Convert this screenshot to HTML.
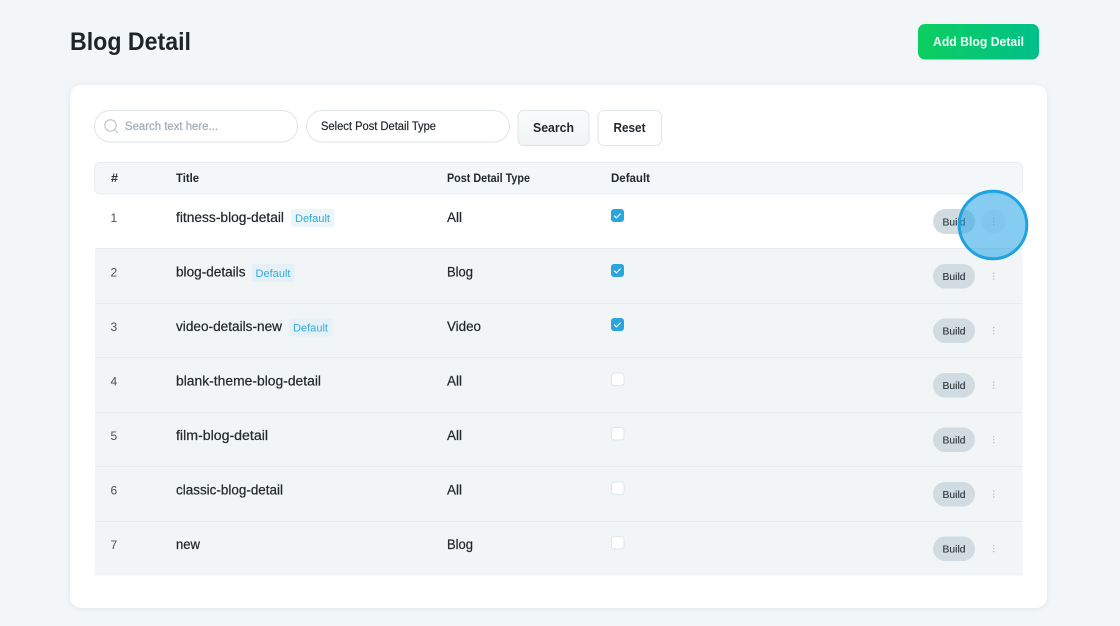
<!DOCTYPE html>
<html><head><meta charset="utf-8"><title>Blog Detail</title>
<style>
html,body{margin:0;padding:0;width:1120px;height:626px;overflow:hidden;background:#f2f6f9}
svg{display:block;filter:blur(.25px)}
text{font-family:"Liberation Sans",sans-serif;fill:#1f2429}
.t{font-size:13.5px;fill:#23282d;stroke:#23282d;stroke-width:.22px}
.h{font-size:11.5px;font-weight:700;fill:#23282d}
.b{font-size:11px;fill:#35a9dc}
.n{font-size:12px;fill:#4a5056}
.u{font-size:10.5px;fill:#2c3238;stroke:#2c3238;stroke-width:.12px}
.p{stroke:#a4adb4;stroke-width:.25px}
.q{stroke:#23282d;stroke-width:.2px}
</style></head><body>
<svg width="1120" height="626" viewBox="0 0 1120 626" xmlns="http://www.w3.org/2000/svg">
<defs>
<linearGradient id="g" x1="0" x2="1" y1="0" y2="0"><stop offset="0" stop-color="#0ccf5f"/><stop offset="1" stop-color="#00bf8a"/></linearGradient>
<linearGradient id="s" x1="0" x2="0" y1="0" y2="1"><stop offset="0" stop-color="#fafbfc"/><stop offset="1" stop-color="#f0f3f5"/></linearGradient>
<filter id="sh" x="-5%" y="-5%" width="110%" height="110%"><feDropShadow dx="0" dy="1" stdDeviation="3" flood-color="#a8b6c0" flood-opacity=".25"/></filter>
</defs>
<rect width="1120" height="626" fill="#f2f6f9"/>
<text x="70" y="50" font-size="25" font-weight="700" textLength="121" lengthAdjust="spacingAndGlyphs">Blog Detail</text>
<rect x="918" y="24" width="121" height="35.500" rx="7" fill="url(#g)"/>
<text x="933" y="46" font-size="13" font-weight="700" style="fill:#eafff3" textLength="91" lengthAdjust="spacingAndGlyphs">Add Blog Detail</text>

<rect x="70" y="85" width="977" height="523" rx="11" fill="#fff" filter="url(#sh)"/>

<rect x="94.500" y="110.500" width="203" height="31.500" rx="15.700" fill="#fff" stroke="#dfe5e8"/>
<circle cx="110.500" cy="125.500" r="5.700" fill="none" stroke="#b4bdc3" stroke-width="1"/>
<path d="M114.700 129.700l3.200 3.200" stroke="#b4bdc3" stroke-width="1" fill="none"/>
<text class="p" x="125" y="130" font-size="11.500" style="fill:#a4adb4" textLength="93" lengthAdjust="spacingAndGlyphs">Search text here...</text>
<rect x="306.500" y="110.500" width="203" height="31.500" rx="15.700" fill="#fff" stroke="#dfe5e8"/>
<text class="q" x="321" y="130" font-size="11.500" style="fill:#23282d" textLength="115" lengthAdjust="spacingAndGlyphs">Select Post Detail Type</text>
<rect x="518" y="110.500" width="71" height="35" rx="6" fill="url(#s)" stroke="#dfe5e8"/>
<text x="533" y="132" font-size="13" font-weight="700" style="fill:#23282d" textLength="41" lengthAdjust="spacingAndGlyphs">Search</text>
<rect x="598" y="110.500" width="63.500" height="35" rx="6" fill="#fff" stroke="#dfe5e8"/>
<text x="613.500" y="132" font-size="13" font-weight="700" style="fill:#23282d" textLength="32" lengthAdjust="spacingAndGlyphs">Reset</text>

<rect x="94.500" y="162.500" width="928" height="31.500" rx="6" fill="#f3f7fa" stroke="#e7ecef"/>
<text class="h" x="111" y="182" textLength="7" lengthAdjust="spacingAndGlyphs">#</text>
<text class="h" x="176" y="182" textLength="23" lengthAdjust="spacingAndGlyphs">Title</text>
<text class="h" x="447" y="182" textLength="83" lengthAdjust="spacingAndGlyphs">Post Detail Type</text>
<text class="h" x="611" y="182" textLength="39" lengthAdjust="spacingAndGlyphs">Default</text>

<!-- row tints -->
<rect x="95" y="249" width="927.500" height="326.500" fill="#f1f5f6"/>
<path d="M95 248.500H1022.500M95 303.500H1022.500M95 357.500H1022.500M95 412.500H1022.500M95 466.500H1022.500M95 521.500H1022.500" stroke="#e6ebee" stroke-width="1"/>

<!-- row 1 -->
<text class="n" x="110.500" y="222">1</text>
<text class="t" x="176" y="222" textLength="108" lengthAdjust="spacingAndGlyphs">fitness-blog-detail</text>
<rect x="291" y="209" width="43" height="18" rx="2" fill="#eaf6fb"/>
<text class="b" x="295" y="222" textLength="35" lengthAdjust="spacingAndGlyphs">Default</text>
<text class="t" x="447" y="222" textLength="15" lengthAdjust="spacingAndGlyphs">All</text>
<rect x="611" y="209" width="13" height="13" rx="3" fill="#2ba6dc"/>
<path d="M614.200 215.700l2.200 2.200 4.200-4.300" fill="none" stroke="#fff" stroke-width="1.100"/>
<rect x="933" y="209" width="42" height="25" rx="12.500" fill="#d0dce2"/>
<text class="u" x="942.500" y="225.500" textLength="23" lengthAdjust="spacingAndGlyphs">Build</text>
<circle cx="993.500" cy="221.500" r="12" fill="#eef3f6"/>
<path d="M993.700 218v1.200M993.700 221v1.200M993.700 224v1.200" stroke="#a6b4bc" stroke-width="1.100"/>

<!-- row 2 -->
<text class="n" x="110.500" y="276.500">2</text>
<text class="t" x="176" y="276.500" textLength="69.500" lengthAdjust="spacingAndGlyphs">blog-details</text>
<rect x="251.500" y="264" width="43.500" height="18" rx="2" fill="#e4f2f8"/>
<text class="b" x="255.500" y="277" textLength="35" lengthAdjust="spacingAndGlyphs">Default</text>
<text class="t" x="447" y="276.500" textLength="26" lengthAdjust="spacingAndGlyphs">Blog</text>
<rect x="611" y="264" width="13" height="13" rx="3" fill="#2ba6dc"/>
<path d="M614.200 270.700l2.200 2.200 4.200-4.300" fill="none" stroke="#fff" stroke-width="1.100"/>
<rect x="933" y="264" width="42" height="24.500" rx="12.200" fill="#d0dce2"/>
<text class="u" x="942.500" y="280" textLength="23" lengthAdjust="spacingAndGlyphs">Build</text>
<path d="M993.700 272.500v1.200M993.700 275.500v1.200M993.700 278.500v1.200" stroke="#a6b4bc" stroke-width="1.100"/>

<!-- row 3 -->
<text class="n" x="110.500" y="331">3</text>
<text class="t" x="176" y="331" textLength="106" lengthAdjust="spacingAndGlyphs">video-details-new</text>
<rect x="289" y="318.500" width="43" height="18" rx="2" fill="#e4f2f8"/>
<text class="b" x="293" y="331.500" textLength="35" lengthAdjust="spacingAndGlyphs">Default</text>
<text class="t" x="447" y="331" textLength="34" lengthAdjust="spacingAndGlyphs">Video</text>
<rect x="611" y="318" width="13" height="13" rx="3" fill="#2ba6dc"/>
<path d="M614.200 324.700l2.200 2.200 4.200-4.300" fill="none" stroke="#fff" stroke-width="1.100"/>
<rect x="933" y="318.500" width="42" height="24.500" rx="12.200" fill="#d0dce2"/>
<text class="u" x="942.500" y="334.500" textLength="23" lengthAdjust="spacingAndGlyphs">Build</text>
<path d="M993.700 327v1.200M993.700 330v1.200M993.700 333v1.200" stroke="#a6b4bc" stroke-width="1.100"/>

<!-- row 4 -->
<text class="n" x="110.500" y="385.500">4</text>
<text class="t" x="176" y="385.500" textLength="145" lengthAdjust="spacingAndGlyphs">blank-theme-blog-detail</text>
<text class="t" x="447" y="385.500" textLength="15" lengthAdjust="spacingAndGlyphs">All</text>
<rect x="611.500" y="373" width="12.500" height="12.500" rx="3" fill="#fff" stroke="#dfe5e8"/>
<rect x="933" y="373" width="42" height="24.500" rx="12.200" fill="#d0dce2"/>
<text class="u" x="942.500" y="389" textLength="23" lengthAdjust="spacingAndGlyphs">Build</text>
<path d="M993.700 381.500v1.200M993.700 384.500v1.200M993.700 387.500v1.200" stroke="#a6b4bc" stroke-width="1.100"/>

<!-- row 5 -->
<text class="n" x="110.500" y="440">5</text>
<text class="t" x="176" y="440" textLength="92" lengthAdjust="spacingAndGlyphs">film-blog-detail</text>
<text class="t" x="447" y="440" textLength="15" lengthAdjust="spacingAndGlyphs">All</text>
<rect x="611.500" y="427.500" width="12.500" height="12.500" rx="3" fill="#fff" stroke="#dfe5e8"/>
<rect x="933" y="427.500" width="42" height="24.500" rx="12.200" fill="#d0dce2"/>
<text class="u" x="942.500" y="443.500" textLength="23" lengthAdjust="spacingAndGlyphs">Build</text>
<path d="M993.700 436v1.200M993.700 439v1.200M993.700 442v1.200" stroke="#a6b4bc" stroke-width="1.100"/>

<!-- row 6 -->
<text class="n" x="110.500" y="494.500">6</text>
<text class="t" x="176" y="494.500" textLength="107" lengthAdjust="spacingAndGlyphs">classic-blog-detail</text>
<text class="t" x="447" y="494.500" textLength="15" lengthAdjust="spacingAndGlyphs">All</text>
<rect x="611.500" y="482" width="12.500" height="12.500" rx="3" fill="#fff" stroke="#dfe5e8"/>
<rect x="933" y="482" width="42" height="24.500" rx="12.200" fill="#d0dce2"/>
<text class="u" x="942.500" y="498" textLength="23" lengthAdjust="spacingAndGlyphs">Build</text>
<path d="M993.700 490.500v1.200M993.700 493.500v1.200M993.700 496.500v1.200" stroke="#a6b4bc" stroke-width="1.100"/>

<!-- row 7 -->
<text class="n" x="110.500" y="549">7</text>
<text class="t" x="176" y="549" textLength="24" lengthAdjust="spacingAndGlyphs">new</text>
<text class="t" x="447" y="549" textLength="26" lengthAdjust="spacingAndGlyphs">Blog</text>
<rect x="611.500" y="536.500" width="12.500" height="12.500" rx="3" fill="#fff" stroke="#dfe5e8"/>
<rect x="933" y="536.500" width="42" height="24.500" rx="12.200" fill="#d0dce2"/>
<text class="u" x="942.500" y="552.500" textLength="23" lengthAdjust="spacingAndGlyphs">Build</text>
<path d="M993.700 545v1.200M993.700 548v1.200M993.700 551v1.200" stroke="#a6b4bc" stroke-width="1.100"/>

<!-- click highlight -->
<circle cx="993" cy="225" r="33.800" fill="#2ba6e6" fill-opacity=".57" stroke="#1ea3de" stroke-width="3"/>
</svg>
</body></html>
